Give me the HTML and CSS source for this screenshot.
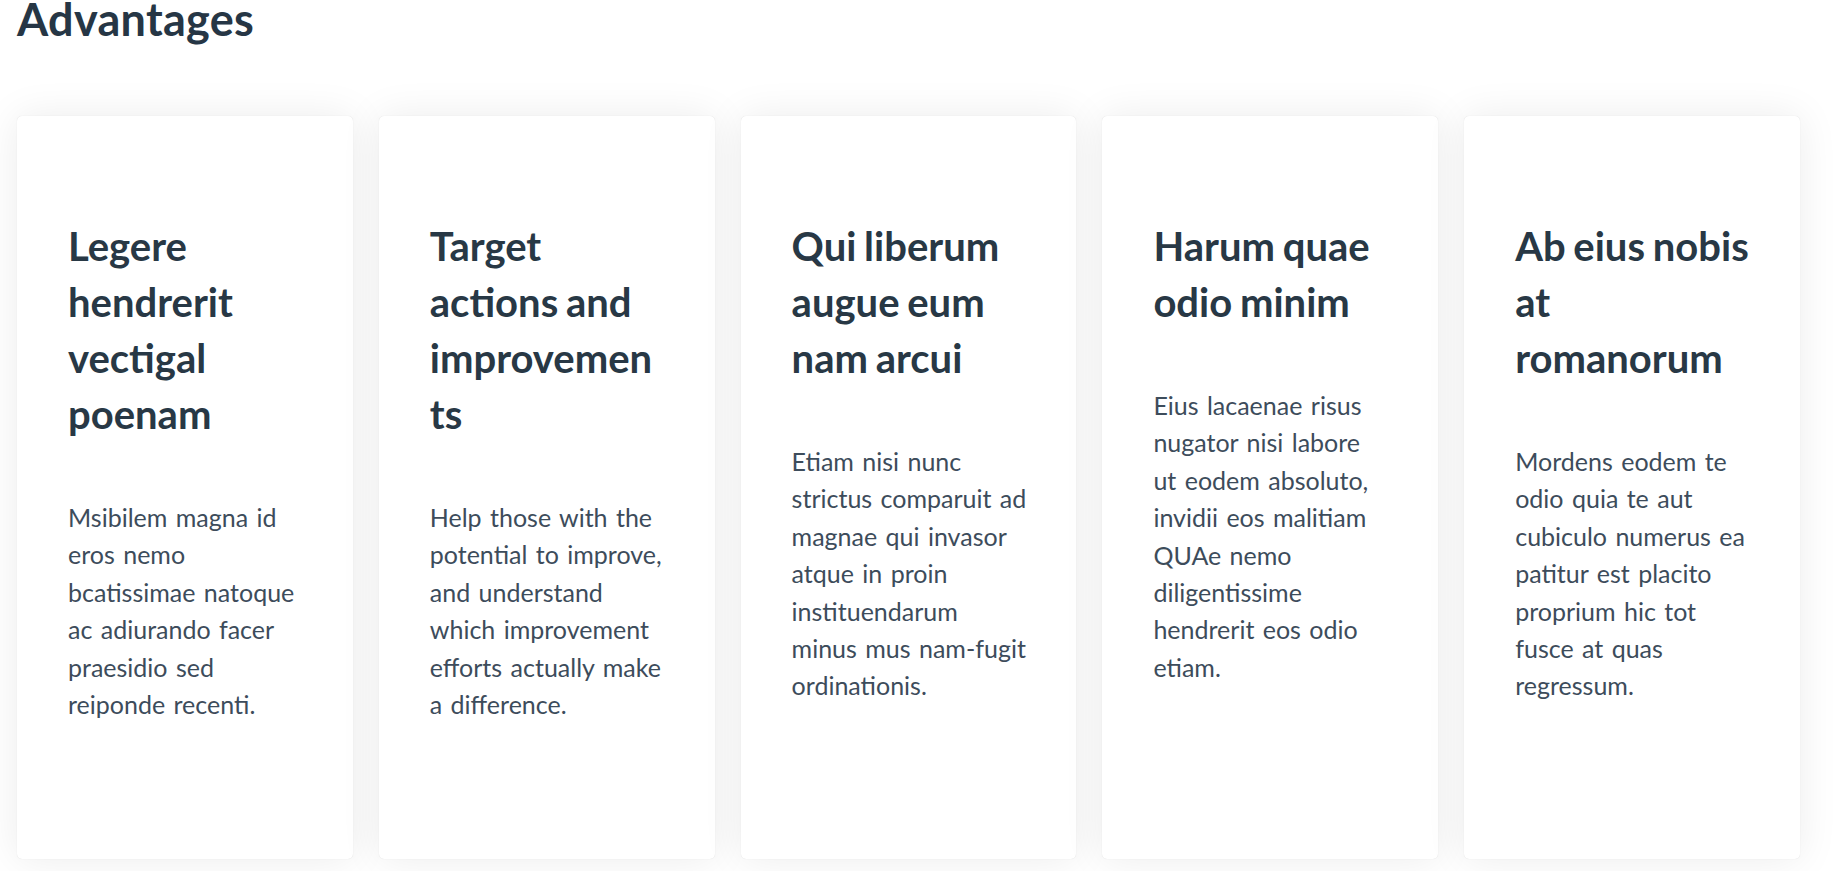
FILE: index.html
```html
<!DOCTYPE html>
<html lang="en">
<head>
<meta charset="utf-8">
<title>Advantages</title>
<link rel="stylesheet" href="styles.css">
</head>
<body>
<section class="advantages">
  <h1 class="section-title">Advantages</h1>
  <div class="cards">
    <article class="card">
      <h2 class="card-title">Legere hendrerit vectigal poenam</h2>
      <p class="card-text">Msibilem magna id eros nemo bcatissimae natoque ac adiurando facer praesidio sed reiponde recenti.</p>
    </article>
    <article class="card">
      <h2 class="card-title">Target actions and improvements</h2>
      <p class="card-text">Help those with the potential to improve, and understand which improvement efforts actually make a difference.</p>
    </article>
    <article class="card">
      <h2 class="card-title">Qui liberum augue eum nam arcui</h2>
      <p class="card-text">Etiam nisi nunc strictus comparuit ad magnae qui invasor atque in proin instituendarum minus mus nam-fugit ordinationis.</p>
    </article>
    <article class="card">
      <h2 class="card-title">Harum quae odio minim</h2>
      <p class="card-text">Eius lacaenae risus nugator nisi labore ut eodem absoluto, invidii eos malitiam QUAe nemo diligentissime hendrerit eos odio etiam.</p>
    </article>
    <article class="card">
      <h2 class="card-title">Ab eius nobis at romanorum</h2>
      <p class="card-text">Mordens eodem te odio quia te aut cubiculo numerus ea patitur est placito proprium hic tot fusce at quas regressum.</p>
    </article>
  </div>
</section>
</body>
</html>
```

FILE: styles.css
```css
html, body {
  margin: 0;
  padding: 0;
  background: #ffffff;
}

body {
  font-family: Lato, "Noto Sans", sans-serif;
  color: #283845;
}

.advantages {
  padding: 0 33px 12px 17px;
}

.section-title {
  margin: 0;
  font-size: 45px;
  line-height: 38px;
  font-weight: 700;
  letter-spacing: 0.3px;
  color: #263645;
}

.cards {
  margin-top: 78px;
  display: grid;
  grid-template-columns: repeat(5, 1fr);
  gap: 26px;
}

.card {
  background: #ffffff;
  border-radius: 5px;
  box-shadow: 0 0 1px rgba(0, 0, 0, 0.15), 0 0 40px rgba(0, 0, 0, 0.08);
  padding: 102px 49px 100px 51px;
  min-height: 743px;
  box-sizing: border-box;
}

.card-title {
  margin: 0 0 57px;
  font-size: 40px;
  line-height: 56px;
  font-weight: 700;
  word-spacing: -2px;
  color: #283845;
  overflow-wrap: anywhere;
}

.card-text {
  margin: 0;
  font-size: 25px;
  line-height: 37.4px;
  word-spacing: 2px;
  color: #3d4c5b;
}
```
